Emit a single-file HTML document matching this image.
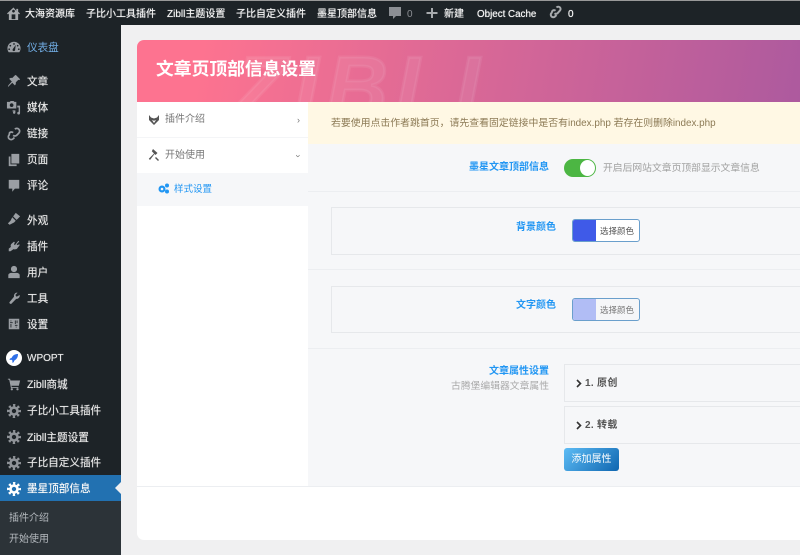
<!DOCTYPE html>
<html lang="zh"><head><meta charset="utf-8"><title>文章页顶部信息设置</title>
<style>
html,body{margin:0;padding:0;background:#f0f0f1}
body{width:800px;height:555px;overflow:hidden;position:relative;font-family:"Liberation Sans","Noto Sans CJK SC",sans-serif;font-size:10.5px}
#root{left:0;top:0;width:800px;height:555px;overflow:hidden;filter:blur(.3px)}
div,span,svg{position:absolute}
.t{white-space:nowrap;line-height:14px}
#bar{left:0;top:1px;width:800px;height:24px;background:#1d2327}
#top{left:0;top:0;width:800px;height:1px;background:#999}
.b{top:8px;color:#f4f4f4;font-size:10px;text-shadow:0 0 .6px #fff}
#side{left:0;top:25px;width:121px;height:530px;background:#1d2327}
.m{left:27px;color:#e8e8e8;font-size:10.6px;text-shadow:0 0 .6px #ccc}
.i{left:7px;width:14px;height:14px;fill:#9a9ea3;color:#8f9398}
.w{background:#fff}
.lb{color:#2196f3;font-weight:bold;font-size:10px;text-align:right}
.ln{background:#eceef1;height:1px}
.sw{width:68px;height:23px;border:1px solid #6a9fcc;border-radius:3px;background:#fff;box-sizing:border-box;overflow:hidden}
.sw i{position:absolute;left:0;top:0;width:23px;height:21px}
.sw b{position:absolute;left:27px;top:4px;font-weight:normal;font-size:8.500px;color:#555;white-space:nowrap;line-height:14px}
.gr{border:1px solid #e6e8eb;box-sizing:border-box}
</style></head><body><div id="root">
<div id="top"></div><div id="bar"></div>
<svg style="left:7px;top:7px;width:13px;height:13px" viewBox="0 0 14 14"><path fill="#a7aaad" fill-rule="evenodd" d="M7 .5 0 7l1 1 1-.9V14h10V7.100l1 .9 1-1-2-1.900V2h-2v2.200zM7 3a1.500 1.500 0 1 1-.01 0zM5 8h4v5H5z"/></svg>
<div class="t b" style="left:25px">大海资源库</div>
<div class="t b" style="left:86px">子比小工具插件</div>
<div class="t b" style="left:167px">Zibll主题设置</div>
<div class="t b" style="left:236px">子比自定义插件</div>
<div class="t b" style="left:317px">墨星顶部信息</div>
<svg style="left:389px;top:7px;width:12px;height:12px;fill:#8c8f94" viewBox="0 0 12 12"><path d="M0 0h12v9H7l-3 3V9H0z"/></svg>
<div class="t b" style="left:407px;color:#8c8f94;text-shadow:none">0</div>
<svg style="left:426px;top:7px;width:12px;height:12px;fill:#a7aaad" viewBox="0 0 12 12"><path d="M5 1h2v4h4.500v2H7v4H5V7H.5V5H5z"/></svg>
<div class="t b" style="left:444px">新建</div>
<div class="t b" style="left:477px;font-size:9.800px">Object Cache</div>
<svg style="left:549px;top:5px;width:14px;height:14px;fill:none;stroke:#a7aaad;stroke-width:2" viewBox="0 0 14 14"><path d="M7.500 2.500a2.300 2.300 0 0 1 3.500 3L8.500 8.300a2.300 2.300 0 0 1-3 0M6.500 5.700a2.300 2.300 0 0 0-3 0L2.500 8a2.300 2.300 0 0 0 3.500 3.500L7.500 10"/></svg>
<div class="t b" style="left:568px">0</div>

<div id="side"></div>
<svg class="i" style="top:40px" viewBox="0 0 16 16"><path fill-rule="evenodd" d="M8 2a7.500 7.500 0 0 0-7.500 7.500c0 1.800.6 3.300 1.500 4.500h12c.9-1.200 1.500-2.700 1.500-4.500A7.500 7.500 0 0 0 8 2zM8 3.500a1 1 0 1 1-.01 0zM3.800 5.500a1 1 0 1 1-.01 0zM12.200 5.500a1 1 0 1 1-.01 0zM2.500 9.500a1 1 0 1 1-.01 0zM13.500 9.500a1 1 0 1 1-.01 0zM10 5.500 9.300 11a1.500 1.500 0 1 1-2.700-.6z"/></svg>
<div class="t m" style="top:41px;color:#72aee6;text-shadow:none">仪表盘</div>
<svg class="i" style="top:74px" viewBox="0 0 16 16"><path d="M10 1l5 5-1 1-1-.5-3 3c.3 1.500 0 2.500-1 3.500L6 10l-4 4-1 1 .5-2 4-4.500L2.500 5.500c1-1 2-1.300 3.500-1l3-3L8.500 2z"/></svg>
<div class="t m" style="top:75px">文章</div>
<svg class="i" style="top:100px;width:15px;height:15px;left:6px" viewBox="0 0 16 16"><path d="M1 2h3l1-1h3l1 1h2v7H1zM6 3.500a2 2 0 1 0 .01 0zM12 6h3v8a1.500 1.500 0 1 1-1.500-1.500V8H12zM7 11h3v2.500a1.300 1.300 0 1 1-1.300-1.300H7z" fill-rule="evenodd"/></svg>
<div class="t m" style="top:101px">媒体</div>
<svg class="i" style="top:127px;fill:none;stroke:#9a9ea3;stroke-width:2" viewBox="0 0 16 16"><path d="M9 2.500a3 3 0 0 1 4.500 4.500L11 9.500a3 3 0 0 1-4 0M7 6.500a3 3 0 0 0-4 0L2.500 9a3 3 0 0 0 4.500 4.500L8.500 12"/></svg>
<div class="t m" style="top:127px">链接</div>
<svg class="i" style="top:153px" viewBox="0 0 16 16"><path d="M5 1h9v11H5zM2 4h2v9h7v2H2z"/></svg>
<div class="t m" style="top:153px">页面</div>
<svg class="i" style="top:179px" viewBox="0 0 16 16"><path d="M2 1h12v10H9l-3 3.500V11H2z"/></svg>
<div class="t m" style="top:179px">评论</div>
<svg class="i" style="top:212px" viewBox="0 0 16 16"><path d="M10 1l5 4-3 3-1 1-4-4zM6 6l4 4-2 2-5 2.500L1 13l3-3z"/></svg>
<div class="t m" style="top:214px">外观</div>
<svg class="i" style="top:239px" viewBox="0 0 16 16"><path d="M13 2l1 1-3 3 1 1 2-1 .5 1-3 4c-1 1-3 1-4 .5L4 14H2v-3l2.500-2c-.5-1-.5-2.500.5-3.500L8 3l1 1-1 2 1 1z"/></svg>
<div class="t m" style="top:240px">插件</div>
<svg class="i" style="top:265px" viewBox="0 0 16 16"><path d="M8 1a3.500 3.500 0 0 1 3.500 3.500C11.500 6.500 10 8 8 8S4.500 6.500 4.500 4.500A3.500 3.500 0 0 1 8 1zM1.500 15v-3.500C1.500 10 3.500 9 5 9h6c1.500 0 3.500 1 3.500 2.500V15z"/></svg>
<div class="t m" style="top:266px">用户</div>
<svg class="i" style="top:291px" viewBox="0 0 16 16"><path d="M14.500 4.500c.5 2-1 4.500-4 4.500L5 14.500c-1 .8-3-.9-2-2L8 6.500C7.500 3.500 10 1.500 12 2L9.500 4.500 11 6.500z"/></svg>
<div class="t m" style="top:292px">工具</div>
<svg class="i" style="top:317px" viewBox="0 0 16 16"><path fill-rule="evenodd" d="M2 2h12v12H2zM4 8v4h1V8zM3.500 6v1h3V6zM4 4v1h1V4zM9 4v4h1V4zM11 4v3h1V4zM9 9v1h3V9zM10 11v1h1v-1z"/></svg>
<div class="t m" style="top:318px">设置</div>
<svg style="left:6px;top:350px;width:16px;height:16px" viewBox="0 0 16 16"><circle cx="8" cy="8" r="8" fill="#fff"/><path d="M12 4C9 4 7 5 5.500 8L4 8.500 3.500 10l2-.3 1 1-.3 2 1.500-.5.500-1.500C11 9 12 7 12 4z" fill="#2e6fe8"/></svg>
<div class="t m" style="top:352px;font-size:10px">WPOPT</div>
<svg class="i" style="top:377px" viewBox="0 0 16 16"><path d="M1 2h2.500l.5 2h11l-1.500 6H5l.5 1.500H13v1H4.500L2.500 3H1z"/><circle cx="5.500" cy="14" r="1.300"/><circle cx="12" cy="14" r="1.300"/></svg>
<div class="t m" style="top:378px">Zibll商城</div>
<svg class="i" style="top:404px" viewBox="0 0 16 16"><g id="g" fill="none" stroke="currentColor"><circle cx="8" cy="8" r="4" stroke-width="3"/><circle cx="8" cy="8" r="6.500" stroke-width="3" stroke-dasharray="2.550 2.550" stroke-dashoffset="1.270"/></g></svg>
<div class="t m" style="top:404px">子比小工具插件</div>
<svg class="i" style="top:430px" viewBox="0 0 16 16"><use href="#g"/></svg>
<div class="t m" style="top:431px">Zibll主题设置</div>
<svg class="i" style="top:456px" viewBox="0 0 16 16"><use href="#g"/></svg>
<div class="t m" style="top:456px">子比自定义插件</div>
<div style="left:0;top:475px;width:121px;height:26px;background:#2271b1"></div>
<svg class="i" style="top:482px;color:#fff" viewBox="0 0 16 16"><use href="#g"/></svg>
<div class="t m" style="top:482px;color:#fff">墨星顶部信息</div>
<div style="left:115px;top:482px;width:0;height:0;border:6px solid transparent;border-right-color:#f0f0f1;border-left:0"></div>
<div style="left:0;top:501px;width:121px;height:54px;background:#2c3338"></div>
<div class="t" style="left:9px;top:512px;color:#b4b9be;font-size:10px">插件介绍</div>
<div class="t" style="left:9px;top:533px;color:#b4b9be;font-size:10px">开始使用</div>

<div class="w" style="left:137px;top:40px;width:663px;height:500px;border-radius:7px 0 0 7px;overflow:hidden">
  <div style="left:0;top:0;width:663px;height:62px;background:linear-gradient(100deg,#fd7390 10%,#ad5a9e 100%);overflow:hidden">
    <div style="left:98px;top:3px;color:rgba(255,255,255,.07);-webkit-text-stroke:3px rgba(255,255,255,.07);font-size:85px;line-height:90px;font-weight:bold;font-style:italic;white-space:nowrap;letter-spacing:8px;font-family:'Liberation Sans',sans-serif">ZIBLL</div>
  </div>
  <div class="t" style="left:19px;top:18px;color:#fff;font-size:17.800px;line-height:22px;font-weight:bold">文章页顶部信息设置</div>
  <div style="left:171px;top:62px;width:492px;height:384px;background:#f6f7f9"></div>
  <div style="left:171px;top:62px;width:492px;height:42px;background:#fff8e4"></div>
  <div class="t" style="left:194px;top:77px;color:#8c7a55;font-size:9.900px">若要使用点击作者跳首页，请先查看固定链接中是否有index.php 若存在则删除index.php</div>
  <div style="left:0;top:97px;width:171px;height:1px;background:#f4f5f7"></div>
  <div style="left:0;top:133px;width:171px;height:33px;background:#f6f7f9"></div>
  <svg style="left:11px;top:74px;width:12px;height:12px;fill:#555" viewBox="0 0 12 12"><path d="M1 1l2 2.500 3 1 3-1 2-2.500v5L6 11 1 6zM4 6l2 3 2-3-2 .8z" fill-rule="evenodd"/></svg>
  <div class="t" style="left:28px;top:73px;color:#777;font-size:10px">插件介绍</div>
  <div class="t" style="left:160px;top:73px;color:#777;font-size:9px">›</div>
  <svg style="left:11px;top:109px;width:12px;height:12px;fill:#555" viewBox="0 0 12 12"><path d="M5 0l4.500 4-2 2-1-1L2 11 .8 9.800 6 4.500 3.800 2.300z"/><path d="M8 8l3 3-1 1-3-3z"/></svg>
  <div class="t" style="left:28px;top:109px;color:#777;font-size:10px">开始使用</div>
  <div class="t" style="left:160px;top:109px;color:#777;font-size:9px;transform:rotate(90deg)">›</div>
  <svg style="left:21px;top:143px;width:11px;height:11px;fill:#2196f3" viewBox="0 0 11 11"><circle cx="4" cy="6" r="3.500"/><circle cx="9" cy="2.500" r="2"/><circle cx="9" cy="8.500" r="2"/><circle cx="4" cy="6" r="1.300" fill="#f6f7f9"/></svg>
  <div class="t" style="left:37px;top:143px;color:#2196f3;font-size:9.500px">样式设置</div>

  <div class="t lb" style="left:322px;top:121px;width:90px">墨星文章顶部信息</div>
  <div style="left:427px;top:119px;width:32px;height:18px;border-radius:9px;background:#4cb643"></div>
  <div style="left:443px;top:120px;width:15px;height:16px;border-radius:50%;background:#fff"></div>
  <div class="t" style="left:466px;top:122px;color:#a0a0a0;font-size:9.800px">开启后网站文章页顶部显示文章信息</div>
  <div class="ln" style="left:171px;top:151px;width:492px"></div>

  <div class="gr" style="left:194px;top:167px;width:480px;height:48px"></div>
  <div class="t lb" style="left:322px;top:181px;width:97px">背景颜色</div>
  <div class="sw" style="left:435px;top:179px"><i style="background:#3f5ae8"></i><b>选择颜色</b></div>
  <div class="ln" style="left:171px;top:229px;width:492px"></div>

  <div class="gr" style="left:194px;top:246px;width:480px;height:47px"></div>
  <div class="t lb" style="left:322px;top:259px;width:97px">文字颜色</div>
  <div class="sw" style="left:435px;top:258px;background:#f5f6f8"><i style="background:#b1bdf5"></i><b style="color:#777">选择颜色</b></div>
  <div class="ln" style="left:171px;top:308px;width:492px"></div>

  <div class="t lb" style="left:322px;top:325px;width:90px">文章属性设置</div>
  <div class="t" style="left:292px;top:340px;width:120px;text-align:right;color:#aaa;font-size:9.800px">古腾堡编辑器文章属性</div>
  <div class="gr" style="left:427px;top:324px;width:250px;height:38px"></div>
  <svg style="left:439px;top:339px;width:6px;height:9px;fill:none;stroke:#333;stroke-width:1.600" viewBox="0 0 6 9"><path d="M1 1l3.500 3.500L1 8"/></svg>
  <div class="t" style="left:448px;top:337px;color:#555;font-size:10px;font-weight:bold;letter-spacing:.3px">1. 原创</div>
  <div class="gr" style="left:427px;top:366px;width:250px;height:38px"></div>
  <svg style="left:439px;top:381px;width:6px;height:9px;fill:none;stroke:#333;stroke-width:1.600" viewBox="0 0 6 9"><path d="M1 1l3.500 3.500L1 8"/></svg>
  <div class="t" style="left:448px;top:379px;color:#555;font-size:10px;font-weight:bold;letter-spacing:.3px">2. 转载</div>
  <div class="t" style="left:427px;top:408px;width:55px;height:23px;border-radius:3px;background:linear-gradient(135deg,#5dbcf5,#0f66b0);color:#fff;font-size:10px;line-height:24px;text-align:center">添加属性</div>
  <div class="ln" style="left:0;top:446px;width:663px"></div>
</div>
</div></body></html>
